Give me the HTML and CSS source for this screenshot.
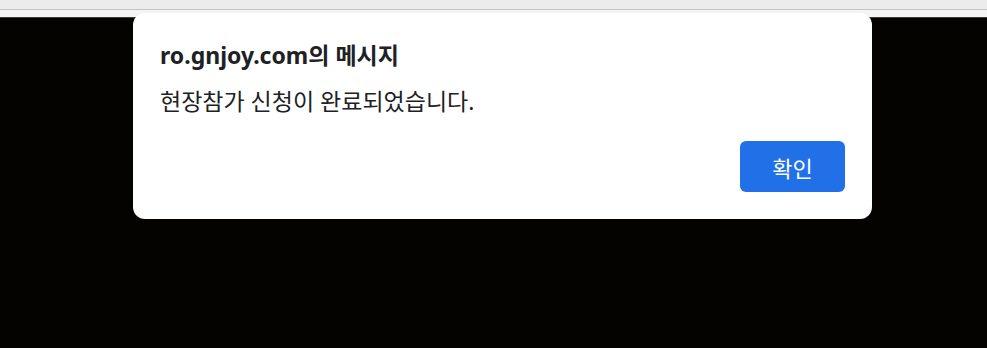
FILE: index.html
```html
<!DOCTYPE html>
<html lang="ko">
<head>
<meta charset="utf-8">
<link rel="stylesheet" href="styles.css">
</head>
<body>
<div class="chrome">
  <div class="tabbar"></div>
  <div class="strip"></div>
</div>
<main class="page"></main>
<div class="dialog" role="alertdialog">
  <h1 class="dialog-title">ro.gnjoy.com의 메시지</h1>
  <p class="dialog-message">현장참가 신청이 완료되었습니다.</p>
  <div class="dialog-actions">
    <button class="btn-primary">확인</button>
  </div>
</div>
</body>
</html>
```
FILE: styles.css
```css
html, body {
  margin: 0;
  padding: 0;
  height: 100%;
}
body {
  background: #050300;
  font-family: "Noto Sans", "Noto Sans CJK KR", sans-serif;
  overflow: hidden;
}
.chrome {
  display: flex;
  flex-direction: column;
}
.tabbar {
  height: 9px;
  background: #ececec;
  border-bottom: 1px solid #c4c4c4;
}
.strip {
  height: 7px;
  background: #f4f4f4;
  border-bottom: 1px solid #3a3a3a;
}
.page {
  height: 331px;
  background: #050300;
}
.dialog {
  position: absolute;
  left: 133px;
  top: 13px;
  width: 739px;
  height: 206px;
  box-sizing: border-box;
  background: #ffffff;
  border-radius: 12px;
  padding: 28px 27px 27px 27px;
  display: flex;
  flex-direction: column;
}
.dialog-title {
  margin: 0;
  font-size: 23px;
  line-height: 28px;
  font-weight: 700;
  color: #202124;
}
.dialog-message {
  margin: 18px 0 0 0;
  font-size: 23px;
  line-height: 28px;
  font-weight: 400;
  color: #202124;
}
.dialog-actions {
  margin-top: auto;
  display: flex;
  justify-content: flex-end;
}
.btn-primary {
  width: 105px;
  height: 51px;
  border: none;
  border-radius: 6px;
  background: #2170e8;
  color: #ffffff;
  font-family: "Noto Sans CJK KR", "Noto Sans", sans-serif;
  font-size: 22px;
  padding: 0;
}
```
